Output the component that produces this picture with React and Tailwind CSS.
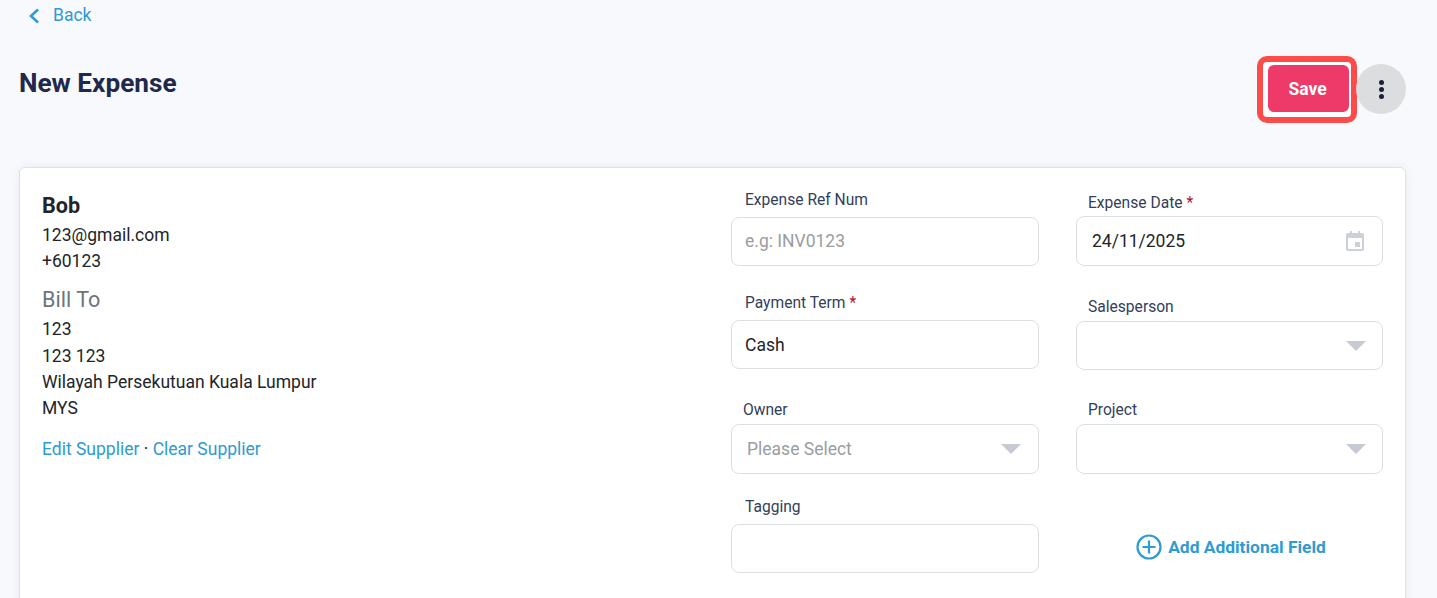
import React from 'react'

const Arrow = () => (
    <svg viewBox="0 0 20 10" className="w-[20px] h-[10px] fill-[#c5cad3]">
        <path d="M0 0h20L10 10z" />
    </svg>
)

const Required = () => <span className="text-[#b3122e] ml-1">*</span>

function Field({ label, required, labelClass, boxClass, children }) {
    return (
        <div className="flex flex-col">
            <label className={`text-[15.6px] leading-[20px] pt-px text-[#33405a] ${labelClass}`}>
                {label}
                {required && <Required />}
            </label>
            <div className={`flex items-center justify-between bg-white border border-[#dcdfe4] rounded-lg text-[17.5px] text-[#212529] ${boxClass}`}>
                {children}
            </div>
        </div>
    )
}

export default function App() {
    return (
        <div className="h-[598px] overflow-hidden bg-[#f8f9fd] font-['Roboto',sans-serif]">
            {/* Back link */}
            <a className="flex items-center h-[31px] pl-[28px] text-[17.5px] text-[#2e9bd2]">
                <svg viewBox="0 0 12 16" className="w-[12px] h-[16px] fill-none stroke-[#2e9bd2] stroke-[2.6]">
                    <path d="M10 1.500L3 8l7 6.500" />
                </svg>
                <span className="ml-[13px]">Back</span>
            </a>

            {/* Header */}
            <div className="flex justify-between h-[136px] pt-[26px] pl-[19px] pr-[31px]">
                <h1 className="mt-[8px] text-[26.2px] leading-[36px] font-bold text-[#1f2a4a]">New Expense</h1>
                <div className="flex items-start">
                    <div className="w-[100px] h-[67px] border-[6px] border-[#fc4c4a] rounded-[10px] bg-white pl-[5px] pr-[2px] pt-[3px] pb-[5px] -mt-px box-border">
                        <button className="w-full h-full rounded-md bg-[#ee3a68] pr-[2px] pt-px text-white text-[17.5px] font-bold">Save</button>
                    </div>
                    <button className="flex flex-col items-center justify-center gap-[2px] w-[50px] h-[50px] mt-[7px] -ml-px rounded-full bg-[#dcdddf]">
                        <span className="w-[5px] h-[5px] rounded-full bg-[#1a2238]" />
                        <span className="w-[5px] h-[5px] rounded-full bg-[#1a2238]" />
                        <span className="w-[5px] h-[5px] rounded-full bg-[#1a2238]" />
                    </button>
                </div>
            </div>

            {/* Card */}
            <div className="flex mx-[19px] mr-[31px] h-[500px] bg-white border border-[#dfe1e6] rounded-md shadow-[0_0_12px_rgba(30,40,70,0.06)]">
                <div className="w-[711px] pl-[22px] pt-[22px] text-[17.5px] leading-[26px] text-[#212529]">
                    <div className="text-[21.6px] leading-[32px] font-bold">Bob</div>
                    <div>123@gmail.com</div>
                    <div>+60123</div>
                    <div className="mt-[10px] text-[21.6px] leading-[31px] text-[#6c757d]">Bill To</div>
                    <div className="mt-px leading-[27px]">123</div>
                    <div>123 123</div>
                    <div>Wilayah Persekutuan Kuala Lumpur</div>
                    <div>MYS</div>
                    <div className="mt-[15px] text-[#2e9bd2]">
                        Edit Supplier <span className="text-[#212529]">·</span> Clear Supplier
                    </div>
                </div>

                <div className="w-[308px] pt-[21px]">
                    <Field label="Expense Ref Num" labelClass="pl-[14px]" boxClass="h-[49px] mt-[7px] pl-[13px]">
                        <span className="text-[#9a9da1]">e.g: INV0123</span>
                    </Field>
                    <div className="mt-[26px]">
                        <Field label="Payment Term" required labelClass="pl-[14px]" boxClass="h-[49px] mt-[7px] pl-[13px] pt-px">
                            <span>Cash</span>
                        </Field>
                    </div>
                    <div className="mt-[30px]">
                        <Field label="Owner" labelClass="pl-[12px]" boxClass="h-[50px] mt-[4px] pl-[15px] pr-[17px]">
                            <span className="text-[#9a9da1]">Please Select</span>
                            <Arrow />
                        </Field>
                    </div>
                    <div className="mt-[22px]">
                        <Field label="Tagging" labelClass="pl-[14px]" boxClass="h-[49px] mt-[7px]" />
                    </div>
                </div>

                <div className="w-[307px] ml-[37px] pt-[24px]">
                    <Field label="Expense Date" required labelClass="pl-[12px]" boxClass="h-[50px] mt-[3px] pl-[15px] pr-[18px]">
                        <span>24/11/2025</span>
                        <svg viewBox="0 0 18 20" className="w-[18px] h-[20px] fill-[#ccd1d9]">
                            <path fillRule="evenodd" d="M4 0h2v2h6V0h2v2h2a2 2 0 0 1 2 2v14a2 2 0 0 1-2 2H2a2 2 0 0 1-2-2V4a2 2 0 0 1 2-2h2V0zM2 7v11h14V7H2z" />
                            <path d="M9 11h5v5H9z" />
                        </svg>
                    </Field>
                    <div className="mt-[30px]">
                        <Field label="Salesperson" labelClass="pl-[12px]" boxClass="h-[49px] mt-[4px] justify-end pr-[16px]">
                            <Arrow />
                        </Field>
                    </div>
                    <div className="mt-[29px]">
                        <Field label="Project" labelClass="pl-[12px]" boxClass="h-[50px] mt-[4px] justify-end pr-[16px]">
                            <Arrow />
                        </Field>
                    </div>
                    <button className="flex items-center justify-center w-full mt-[60px] pl-[3px] text-[17.4px] leading-[24px] font-bold text-[#2e9bd2]">
                        <svg viewBox="0 0 26 26" className="w-[26px] h-[26px] fill-none stroke-[#2e9bd2] stroke-[2.2] mr-[6px]">
                            <circle cx="13" cy="13" r="11.500" />
                            <path d="M13 6.500v13M6.500 13h13" />
                        </svg>
                        Add Additional Field
                    </button>
                </div>
            </div>
        </div>
    )
}
